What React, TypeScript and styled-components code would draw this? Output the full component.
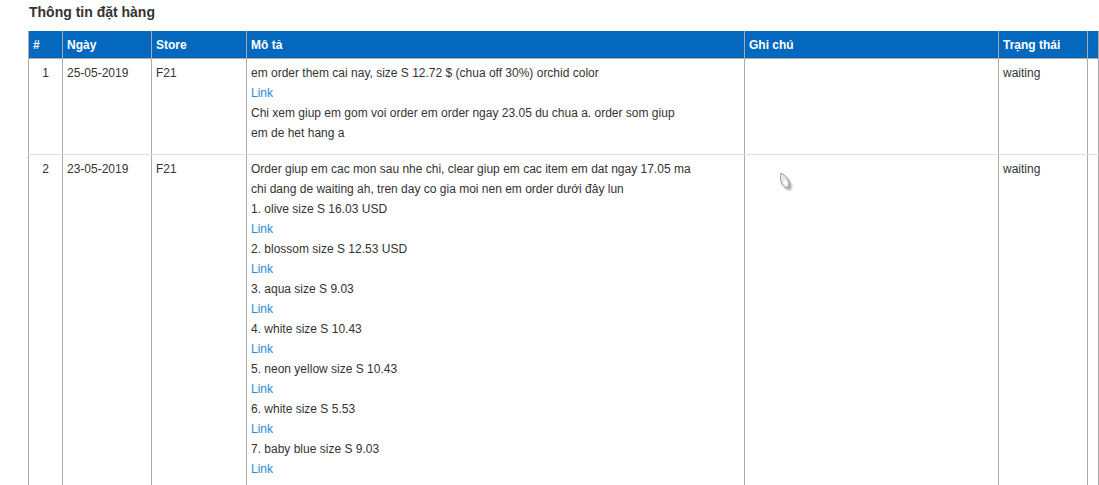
import React from "react";
import styled, { createGlobalStyle } from "styled-components";

const GlobalStyle = createGlobalStyle`
  html, body {
    margin: 0;
    padding: 0;
    background: #ffffff;
    overflow: hidden;
  }
  body {
    font-family: "Liberation Sans", Arial, sans-serif;
    font-size: 12px;
    color: #333333;
  }
`;

const Page = styled.div`
  position: relative;
  padding: 3px 0 0 28px;
`;

const Title = styled.h3`
  margin: 0 0 10px 1px;
  font-size: 14px;
  line-height: 18px;
  font-weight: bold;
  color: #333333;
`;

const Table = styled.table`
  border-collapse: collapse;
  table-layout: fixed;
  width: 1070px;
`;

const HeadCell = styled.th`
  background: #0468bf;
  color: #ffffff;
  font-weight: bold;
  font-size: 12px;
  line-height: 20px;
  text-align: left;
  padding: 4px 4px 3px;
  border-left: 1px solid #aaaaaa;
  border-right: 1px solid #aaaaaa;
  border-bottom: 1px solid #aaaaaa;
  white-space: nowrap;
  overflow: hidden;
`;

const Cell = styled.td<{ $center?: boolean }>`
  vertical-align: top;
  font-size: 12px;
  line-height: 20px;
  padding: 4px 4px 11px;
  text-align: ${(p) => (p.$center ? "center" : "left")};
  border-left: 1px solid #aaaaaa;
  border-right: 1px solid #aaaaaa;
  border-bottom: 1px solid #dddddd;
  color: #333333;
`;

const Line = styled.div``;

const LinkLine = styled.a`
  display: block;
  color: #1e8ad9;
  text-decoration: none;
`;

const Cursor = styled.svg`
  position: absolute;
  left: 776px;
  top: 169px;
  pointer-events: none;
`;

type Item = { text: string } | { link: true };

const row1: Item[] = [
  { text: "em order them cai nay, size S 12.72 $ (chua off 30%) orchid color" },
  { link: true },
  { text: "Chi xem giup em gom voi order em order ngay 23.05 du chua a. order som giup" },
  { text: "em de het hang a" },
];

const row2: Item[] = [
  { text: "Order giup em cac mon sau nhe chi, clear giup em cac item em dat ngay 17.05 ma" },
  { text: "chi dang de waiting ah, tren day co gia moi nen em order dưới đây lun" },
  { text: "1. olive size S 16.03 USD" },
  { link: true },
  { text: "2. blossom size S 12.53 USD" },
  { link: true },
  { text: "3. aqua size S 9.03" },
  { link: true },
  { text: "4. white size S 10.43" },
  { link: true },
  { text: "5. neon yellow size S 10.43" },
  { link: true },
  { text: "6. white size S 5.53" },
  { link: true },
  { text: "7. baby blue size S 9.03" },
  { link: true },
];

const rows = [
  { no: 1, date: "25-05-2019", store: "F21", desc: row1, note: "", status: "waiting" },
  { no: 2, date: "23-05-2019", store: "F21", desc: row2, note: "", status: "waiting" },
];

const Description = ({ items }: { items: Item[] }) => (
  <>
    {items.map((it, i) =>
      "link" in it ? (
        <LinkLine key={i} href="#">
          Link
        </LinkLine>
      ) : (
        <Line key={i}>{it.text}</Line>
      )
    )}
  </>
);

export default function App() {
  return (
    <>
      <GlobalStyle />
      <Page>
        <Title>Thông tin đặt hàng</Title>
        <Table>
          <colgroup>
            <col style={{ width: 34 }} />
            <col style={{ width: 89 }} />
            <col style={{ width: 95 }} />
            <col style={{ width: 498 }} />
            <col style={{ width: 254 }} />
            <col style={{ width: 89 }} />
            <col style={{ width: 11 }} />
          </colgroup>
          <thead>
            <tr>
              <HeadCell>#</HeadCell>
              <HeadCell>Ngày</HeadCell>
              <HeadCell>Store</HeadCell>
              <HeadCell>Mô tả</HeadCell>
              <HeadCell>Ghi chú</HeadCell>
              <HeadCell>Trạng thái</HeadCell>
              <HeadCell></HeadCell>
            </tr>
          </thead>
          <tbody>
            {rows.map((r) => (
              <tr key={r.no}>
                <Cell $center>{r.no}</Cell>
                <Cell>{r.date}</Cell>
                <Cell>{r.store}</Cell>
                <Cell>
                  <Description items={r.desc} />
                </Cell>
                <Cell>{r.note}</Cell>
                <Cell>{r.status}</Cell>
                <Cell></Cell>
              </tr>
            ))}
          </tbody>
        </Table>
        <Cursor width="24" height="28" viewBox="0 0 24 28">
          <defs>
            <filter id="sh" x="-50%" y="-50%" width="200%" height="200%">
              <feGaussianBlur stdDeviation="1.3" />
            </filter>
          </defs>
          <path
            d="M5 4 C9 6 14 11 13 17 C12 20 8 19 6 15 C4 11 4 7 5 4 Z"
            fill="#000"
            opacity="0.35"
            filter="url(#sh)"
            transform="translate(2.5 2.5)"
          />
          <path
            d="M5 4 C9 6 14 11 13 17 C12 20 8 19 6 15 C4 11 4 7 5 4 Z"
            fill="#e6e6e6"
            stroke="#9a9a9a"
            strokeWidth="1"
          />
          <ellipse cx="9.3" cy="13.5" rx="1.8" ry="2.6" fill="#ffffff" transform="rotate(-25 9.3 13.5)" />
        </Cursor>
      </Page>
    </>
  );
}
